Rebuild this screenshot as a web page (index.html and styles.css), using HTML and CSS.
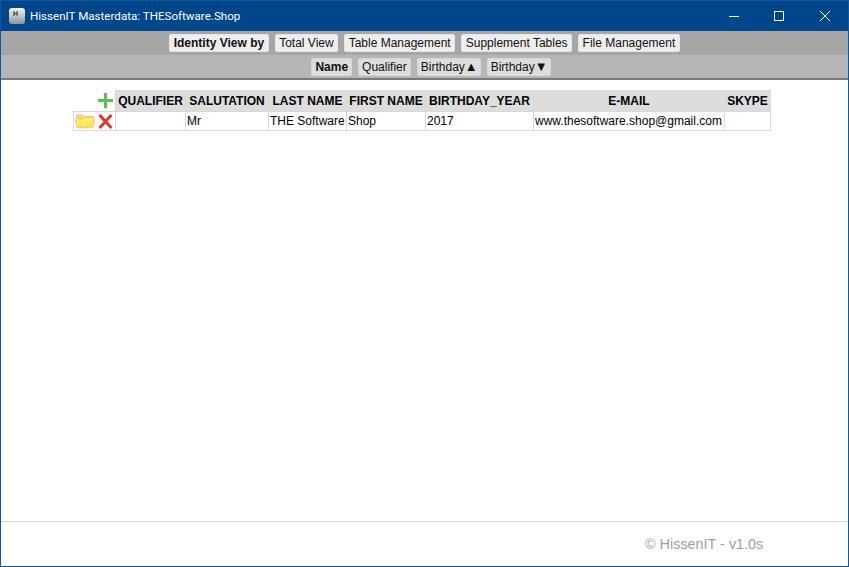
FILE: index.html
```html
<!DOCTYPE html>
<html lang="en">
<head>
<meta charset="utf-8">
<title>HissenIT Masterdata: THESoftware.Shop</title>
<link rel="stylesheet" href="styles.css">
</head>
<body>
<div class="window">
  <header class="titlebar">
    <div class="app-icon"><span>H</span></div>
    <div class="title">HissenIT Masterdata: THESoftware.Shop</div>
    <div class="controls">
      <svg class="ctl" width="46" height="31" viewBox="0 0 46 31"><path d="M19 15.500h10" stroke="#fff" fill="none"/></svg>
      <svg class="ctl" width="46" height="31" viewBox="0 0 46 31"><rect x="18.500" y="10.500" width="9" height="9" stroke="#fff" fill="none"/></svg>
      <svg class="ctl" width="46" height="31" viewBox="0 0 46 31"><path d="M18 10l10 10M28 10l-10 10" stroke="#fff" fill="none"/></svg>
    </div>
  </header>
  <nav class="bar bar-one">
    <a class="btn btn-label">Identity View by</a>
    <a class="btn">Total View</a>
    <a class="btn">Table Management</a>
    <a class="btn">Supplement Tables</a>
    <a class="btn">File Management</a>
  </nav>
  <nav class="bar bar-two">
    <a class="btn btn-label alt">Name</a>
    <a class="btn alt">Qualifier</a>
    <a class="btn alt">Birthday<span class="arrow">▲</span></a>
    <a class="btn alt">Birthday<span class="arrow">▼</span></a>
  </nav>
  <main class="content">
    <table class="grid">
      <thead>
        <tr>
          <th class="tools-head">
            <svg width="15" height="15" viewBox="0 0 15 15"><path d="M7.500 0v15M0 7.500h15" stroke="#5cc04f" stroke-width="3" fill="none"/></svg>
          </th>
          <th class="c1">QUALIFIER</th>
          <th class="c2">SALUTATION</th>
          <th class="c3">LAST NAME</th>
          <th class="c4">FIRST NAME</th>
          <th class="c5">BIRTHDAY_YEAR</th>
          <th class="c6">E-MAIL</th>
          <th class="c7">SKYPE</th>
        </tr>
      </thead>
      <tbody>
        <tr>
          <td class="tools">
            <div class="tool-row">
              <svg width="20" height="16" viewBox="0 0 21 16">
                <defs><linearGradient id="folder" x1="0" y1="0" x2="0" y2="1"><stop offset="0" stop-color="#fff27e"/><stop offset="1" stop-color="#ffdf48"/></linearGradient></defs>
                <path d="M1.500 5V3Q1.500 1.500 3 1.500H8L9.500 3H18Q19.500 3 19.500 4.500V7H1.500Z" fill="#f6dd72" stroke="#efc48e"/>
                <path d="M.5 6.500Q.5 5.500 1.500 5.500H9.500L11 4H19.500Q20.700 4 20.500 5.500L19 13.500Q18.800 15.200 17 15.200H3.500Q1.800 15.200 1.600 13.500Z" fill="url(#folder)" stroke="#f0bd85"/>
              </svg>
              <svg width="15" height="15" viewBox="0 0 15 15"><path d="M1.500 1l12 13M13.500 1l-12 13" stroke="#dc3a2c" stroke-width="3" fill="none"/></svg>
            </div>
          </td>
          <td></td>
          <td>Mr</td>
          <td>THE Software</td>
          <td>Shop</td>
          <td>2017</td>
          <td>www.thesoftware.shop@gmail.com</td>
          <td></td>
        </tr>
      </tbody>
    </table>
  </main>
  <footer class="footer">
    <span class="copy">© HissenIT - v1.0s</span>
  </footer>
</div>
</body>
</html>
```

FILE: styles.css
```css
* { box-sizing: border-box; }
html, body { margin: 0; padding: 0; height: 100%; overflow: hidden; background: #fff; }
body { font-family: "Liberation Sans", Arial, sans-serif; font-size: 12px; color: #000; }
.window {
  width: 849px;
  height: 567px;
  border: 1px solid #0b5a9f;
  border-top: 0;
  display: flex;
  flex-direction: column;
}
.titlebar {
  height: 31px;
  background: #00468b;
  border-top: 1px solid #0b5a9f;
  display: flex;
  align-items: center;
  color: #fff;
  padding-left: 8px;
  flex: none;
}
.app-icon {
  width: 16px;
  height: 16px;
  border-radius: 3px;
  background: linear-gradient(#f4f4f4, #8f949c);
  color: #333;
  font: bold 7px "Liberation Sans", sans-serif;
  padding: 2px 0 0 4px;
  margin-right: 5px;
}
.title { font: 11.600px Roboto, sans-serif; flex: 1; }
.controls { display: flex; }
.ctl { display: block; }
.bar {
  height: 24px;
  display: flex;
  justify-content: center;
  align-items: center;
  gap: 6px;
  flex: none;
}
.bar-one { background: #a6a6a6; }
.bar-two { background: #b6b6b6; height: 25px; border-bottom: 2px solid #7a7a7a; padding: 1px 0 0 13px; }
.btn {
  height: 18px;
  line-height: 16px;
  padding: 0 3.500px;
  background: #eeeeee;
  border: 1px solid #e6e6e6;
  border-radius: 2px;
  font-size: 12px;
  color: #111;
  white-space: nowrap;
}
.btn.alt { background: #dddddd; border-color: #d6d6d6; padding: 0 3px; }
.btn-label { font-weight: bold; }
.arrow { font-size: 13px; line-height: 0; margin-right: -1px; }
.content { flex: 1; padding: 10px 0 0 72px; }
.grid { border-collapse: collapse; table-layout: fixed; width: 697px; }
.grid th, .grid td { border: 1px solid #d8d8d8; overflow: hidden; white-space: nowrap; }
.grid th { background: #dddddd; font-size: 12px; height: 21px; padding: 0 2px; text-align: center; }
.grid td { height: 19px; font-size: 12px; padding: 0 1px; }
.grid .tools-head { background: #fff; border: 0; border-right: 1px solid #d8d8d8; border-bottom: 1px solid #d8d8d8; width: 42px; padding: 0; vertical-align: middle; }
.tools-head svg { display: block; margin-left: auto; margin-right: 2px; }
.grid .tools { padding: 0; }
.tool-row { display: flex; justify-content: flex-end; align-items: center; gap: 3px; padding-right: 2px; }
.tool-row svg { display: block; }
.c1 { width: 70px; }
.c2 { width: 83px; }
.c3 { width: 78px; }
.c4 { width: 79px; }
.c5 { width: 108px; }
.c6 { width: 191px; }
.c7 { width: 46px; }
.footer {
  height: 45px;
  border-top: 1px solid #d4d4d4;
  flex: none;
  display: flex;
  align-items: center;
  padding-left: 644px;
}
.copy { font-size: 14.400px; color: #a0a0a0; }
```
